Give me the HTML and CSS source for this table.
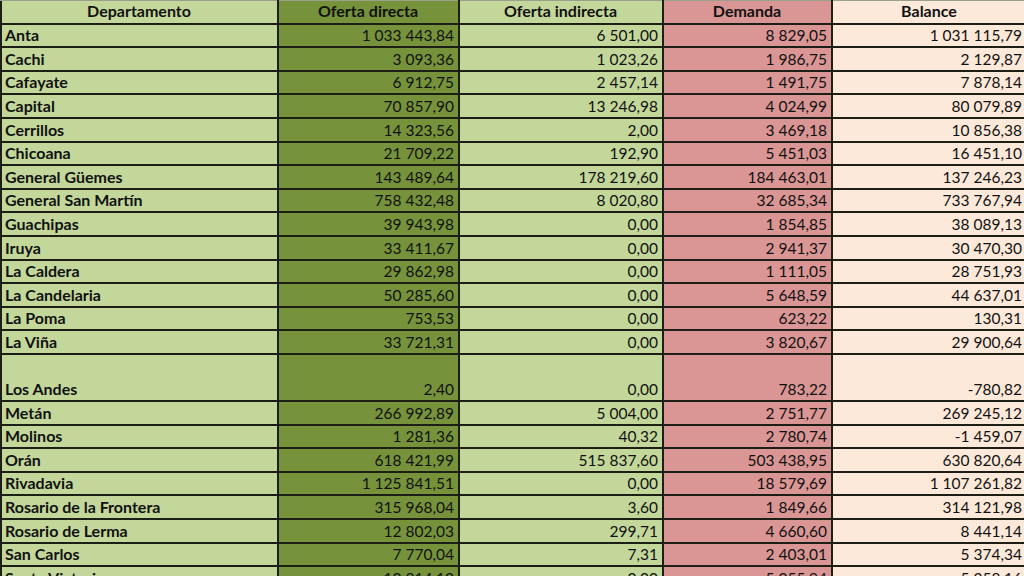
FILE: index.html
```html
<!DOCTYPE html>
<html lang="es">
<head>
<meta charset="utf-8">
<title>Balance por departamento</title>
<link rel="stylesheet" href="styles.css">
</head>
<body>
<table class="sheet">
  <colgroup>
    <col class="c-dep"><col class="c-od"><col class="c-oi"><col class="c-dem"><col class="c-bal">
  </colgroup>
  <thead>
    <tr>
      <th class="dep">Departamento</th>
      <th class="od">Oferta directa</th>
      <th class="oi">Oferta indirecta</th>
      <th class="dem">Demanda</th>
      <th class="bal">Balance</th>
    </tr>
  </thead>
  <tbody>
    <tr><td class="dep">Anta</td><td class="od">1 033 443,84</td><td class="oi">6 501,00</td><td class="dem">8 829,05</td><td class="bal">1 031 115,79</td></tr>
    <tr><td class="dep">Cachi</td><td class="od">3 093,36</td><td class="oi">1 023,26</td><td class="dem">1 986,75</td><td class="bal">2 129,87</td></tr>
    <tr><td class="dep">Cafayate</td><td class="od">6 912,75</td><td class="oi">2 457,14</td><td class="dem">1 491,75</td><td class="bal">7 878,14</td></tr>
    <tr><td class="dep">Capital</td><td class="od">70 857,90</td><td class="oi">13 246,98</td><td class="dem">4 024,99</td><td class="bal">80 079,89</td></tr>
    <tr><td class="dep">Cerrillos</td><td class="od">14 323,56</td><td class="oi">2,00</td><td class="dem">3 469,18</td><td class="bal">10 856,38</td></tr>
    <tr><td class="dep">Chicoana</td><td class="od">21 709,22</td><td class="oi">192,90</td><td class="dem">5 451,03</td><td class="bal">16 451,10</td></tr>
    <tr><td class="dep">General Güemes</td><td class="od">143 489,64</td><td class="oi">178 219,60</td><td class="dem">184 463,01</td><td class="bal">137 246,23</td></tr>
    <tr><td class="dep">General San Martín</td><td class="od">758 432,48</td><td class="oi">8 020,80</td><td class="dem">32 685,34</td><td class="bal">733 767,94</td></tr>
    <tr><td class="dep">Guachipas</td><td class="od">39 943,98</td><td class="oi">0,00</td><td class="dem">1 854,85</td><td class="bal">38 089,13</td></tr>
    <tr><td class="dep">Iruya</td><td class="od">33 411,67</td><td class="oi">0,00</td><td class="dem">2 941,37</td><td class="bal">30 470,30</td></tr>
    <tr><td class="dep">La Caldera</td><td class="od">29 862,98</td><td class="oi">0,00</td><td class="dem">1 111,05</td><td class="bal">28 751,93</td></tr>
    <tr><td class="dep">La Candelaria</td><td class="od">50 285,60</td><td class="oi">0,00</td><td class="dem">5 648,59</td><td class="bal">44 637,01</td></tr>
    <tr><td class="dep">La Poma</td><td class="od">753,53</td><td class="oi">0,00</td><td class="dem">623,22</td><td class="bal">130,31</td></tr>
    <tr><td class="dep">La Viña</td><td class="od">33 721,31</td><td class="oi">0,00</td><td class="dem">3 820,67</td><td class="bal">29 900,64</td></tr>
    <tr class="tall"><td class="dep">Los Andes</td><td class="od">2,40</td><td class="oi">0,00</td><td class="dem">783,22</td><td class="bal">-780,82</td></tr>
    <tr><td class="dep">Metán</td><td class="od">266 992,89</td><td class="oi">5 004,00</td><td class="dem">2 751,77</td><td class="bal">269 245,12</td></tr>
    <tr><td class="dep">Molinos</td><td class="od">1 281,36</td><td class="oi">40,32</td><td class="dem">2 780,74</td><td class="bal">-1 459,07</td></tr>
    <tr><td class="dep">Orán</td><td class="od">618 421,99</td><td class="oi">515 837,60</td><td class="dem">503 438,95</td><td class="bal">630 820,64</td></tr>
    <tr><td class="dep">Rivadavia</td><td class="od">1 125 841,51</td><td class="oi">0,00</td><td class="dem">18 579,69</td><td class="bal">1 107 261,82</td></tr>
    <tr><td class="dep">Rosario de la Frontera</td><td class="od">315 968,04</td><td class="oi">3,60</td><td class="dem">1 849,66</td><td class="bal">314 121,98</td></tr>
    <tr><td class="dep">Rosario de Lerma</td><td class="od">12 802,03</td><td class="oi">299,71</td><td class="dem">4 660,60</td><td class="bal">8 441,14</td></tr>
    <tr><td class="dep">San Carlos</td><td class="od">7 770,04</td><td class="oi">7,31</td><td class="dem">2 403,01</td><td class="bal">5 374,34</td></tr>
    <tr><td class="dep">Santa Victoria</td><td class="od">10 314,10</td><td class="oi">0,00</td><td class="dem">5 055,94</td><td class="bal">5 258,16</td></tr>
  </tbody>
</table>
</body>
</html>
```
FILE: styles.css
```css
html, body {
  margin: 0;
  padding: 0;
  overflow: hidden;
  background: #ffffff;
}
body {
  width: 1024px;
  height: 576px;
}
.sheet {
  border-collapse: collapse;
  table-layout: fixed;
  width: 1026px;
  font-family: Lato, "Open Sans", sans-serif;
  font-size: 15.5px;
  color: #111;
  margin-top: -1px;
}
.c-dep { width: 277px; }
.c-od { width: 181px; }
.c-oi { width: 204px; }
.c-dem { width: 169px; }
.c-bal { width: 195px; }

.sheet th,
.sheet td {
  border: 2px solid #1d1f17;
  height: 19.6px;
  padding: 0 4px 2px 3px;
  vertical-align: bottom;
  line-height: 18px;
  white-space: nowrap;
  overflow: hidden;
}
.sheet th {
  font-weight: 700;
  font-size: 16px;
  text-align: center;
  border-top-color: #9aa08c;
  height: 18.6px;
  padding-bottom: 3px;
}
.sheet td { text-align: right; }
.sheet td.dep {
  text-align: left;
  font-weight: 700;
  font-size: 16px;
}
.sheet tr.tall td { height: 43.2px; }

.dep { background: #c4d79b; }
.od { background: #76933c; }
.oi { background: #c4d79b; }
.dem { background: #da9694; }
.bal { background: #fde9d9; }
```
